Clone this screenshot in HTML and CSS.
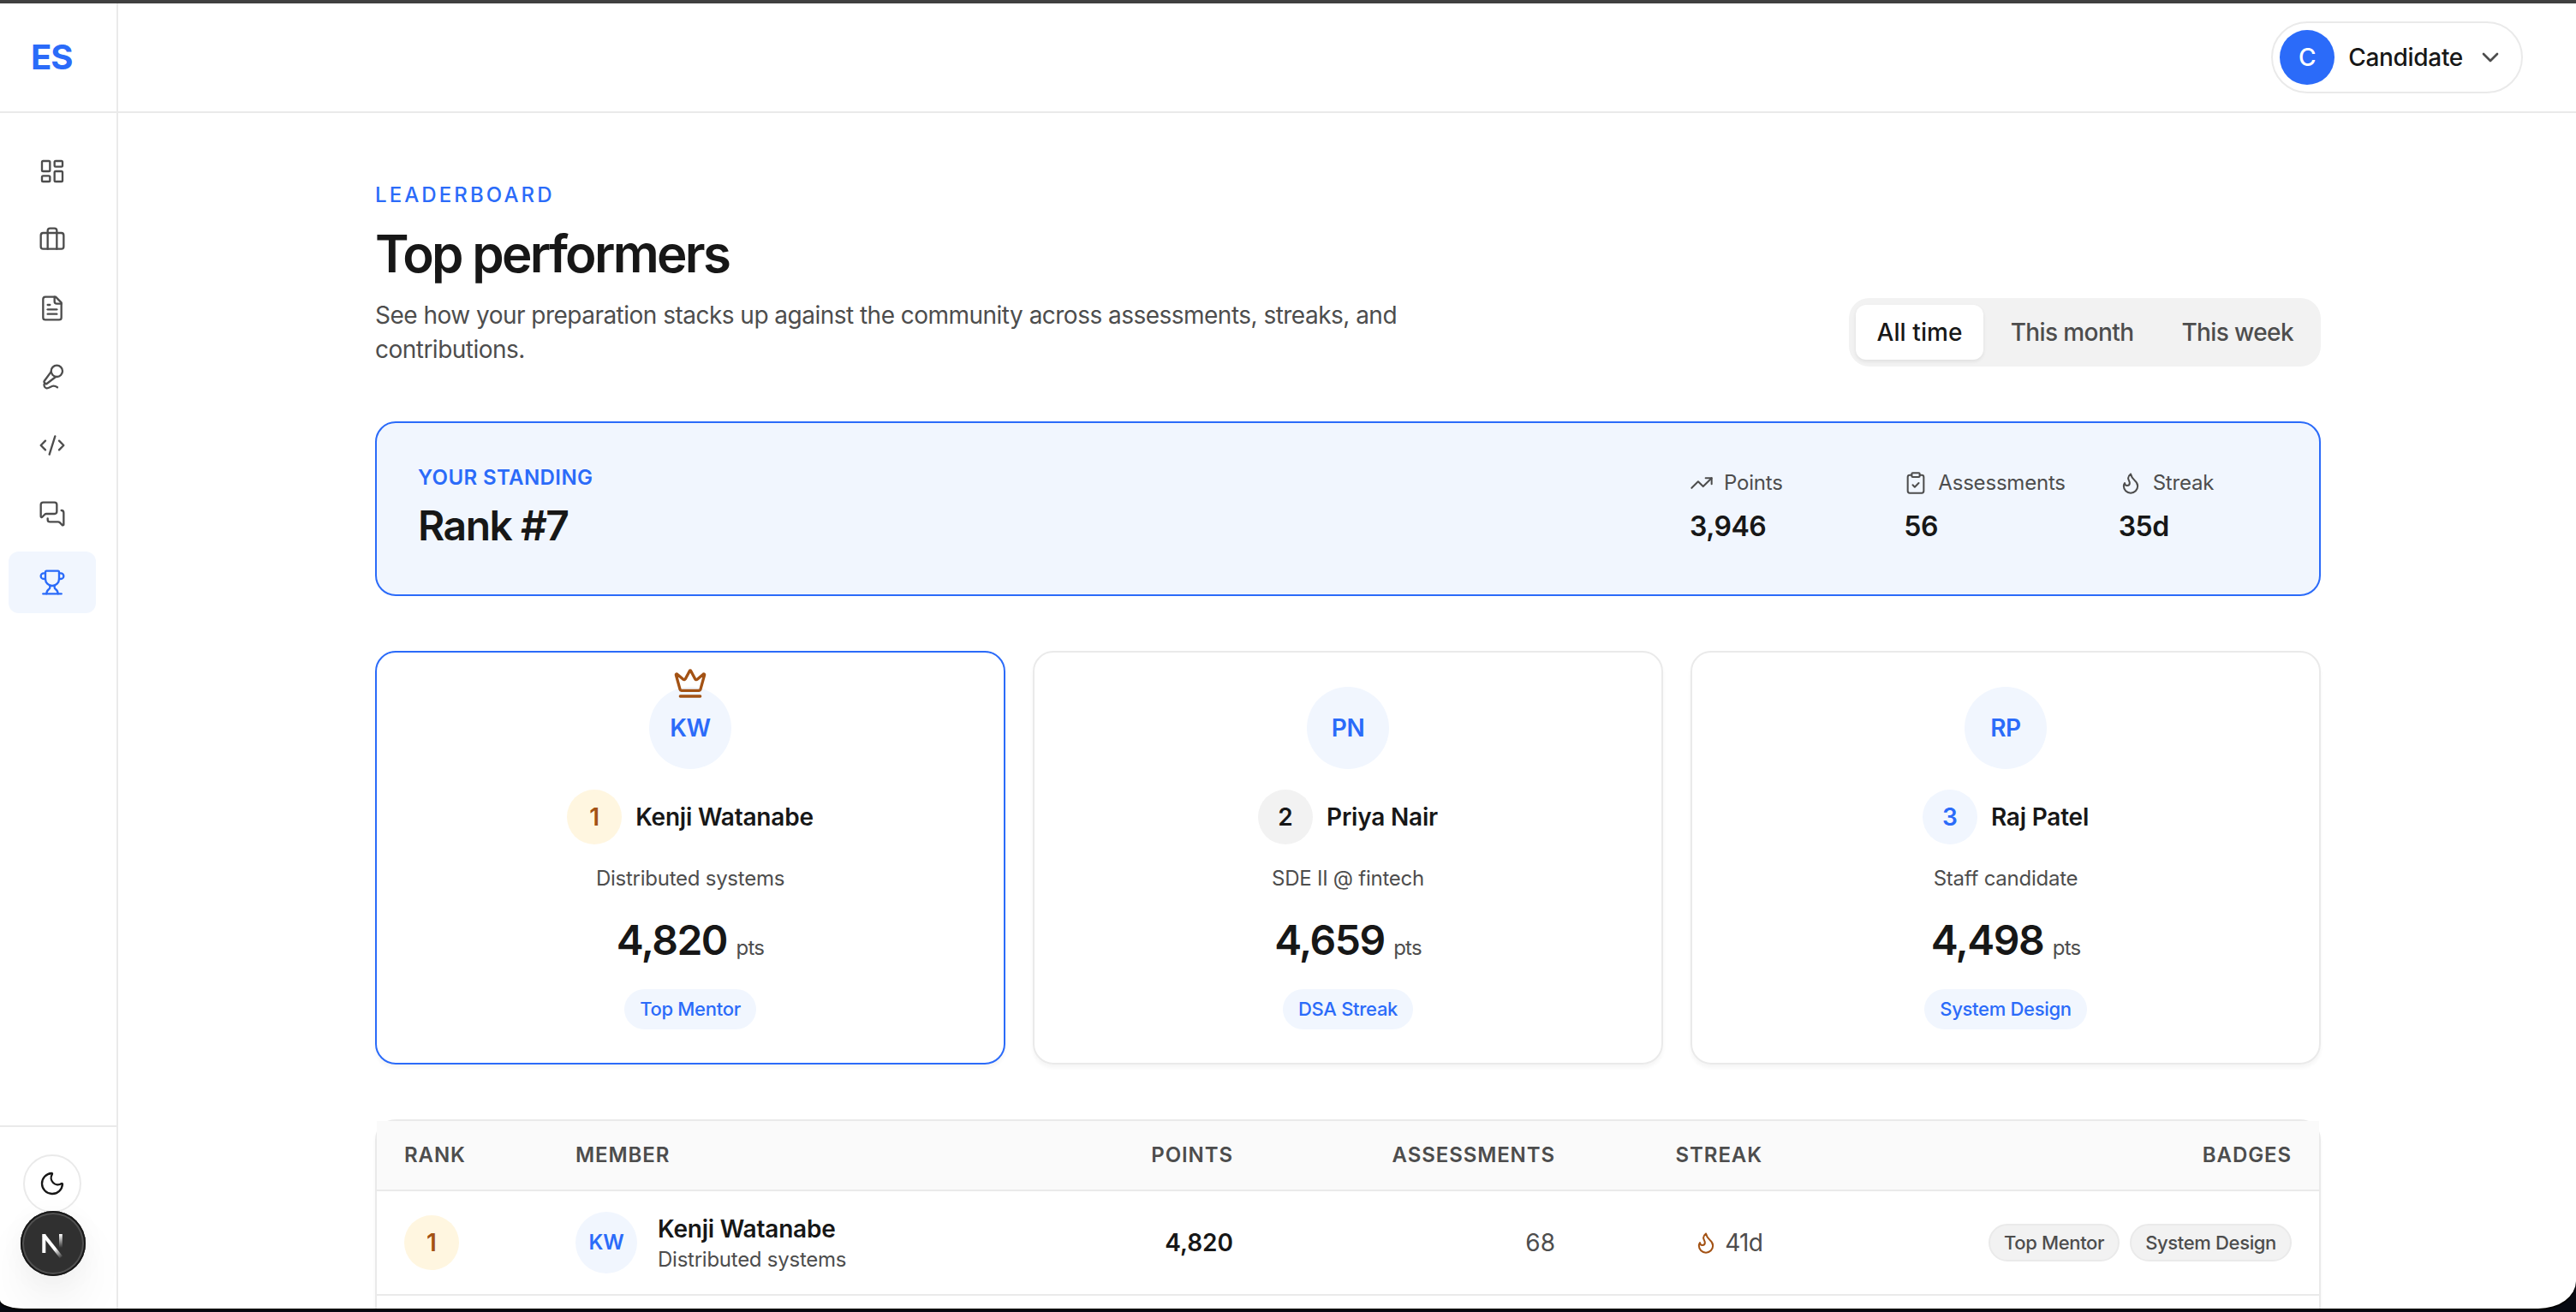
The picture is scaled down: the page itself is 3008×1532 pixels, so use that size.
FILE: index.html
```html
<!DOCTYPE html>
<html lang="en">
<head>
    <meta charset="UTF-8">
    <meta name="viewport" content="width=device-width, initial-scale=1.0">
    <title>Leaderboard</title>
    <link rel="stylesheet" href="styles.css">
</head>
<body>

    <!-- shared icons -->
    <svg class="sprite">
        <symbol id="flame" viewBox="0 0 24 24"><path d="M12 3q1 4 4 6.5t3 5.5a1 1 0 0 1-14 0 5 5 0 0 1 1-3 1 1 0 0 0 5 0c0-2-1.5-3-1.5-5q0-2 2.5-4"/></symbol>
    </svg>

    <div class="window">
        <aside class="sidebar">
            <div class="logo">ES</div>
            <nav class="nav">
                <a class="nav-item"><svg class="icon" viewBox="0 0 24 24"><rect width="7" height="9" x="3" y="3" rx="1"/><rect width="7" height="5" x="14" y="3" rx="1"/><rect width="7" height="9" x="14" y="12" rx="1"/><rect width="7" height="5" x="3" y="16" rx="1"/></svg></a>
                <a class="nav-item"><svg class="icon" viewBox="0 0 24 24"><path d="M16 20V4a2 2 0 0 0-2-2h-4a2 2 0 0 0-2 2v16"/><rect width="20" height="14" x="2" y="6" rx="2"/></svg></a>
                <a class="nav-item"><svg class="icon" viewBox="0 0 24 24"><path d="M15 2H6a2 2 0 0 0-2 2v16a2 2 0 0 0 2 2h12a2 2 0 0 0 2-2V7Z"/><path d="M14 2v4a2 2 0 0 0 2 2h4"/><path d="M10 9H8"/><path d="M16 13H8"/><path d="M16 17H8"/></svg></a>
                <a class="nav-item"><svg class="icon" viewBox="0 0 24 24"><path d="m11 7.601-5.994 8.19a1 1 0 0 0 .1 1.298l.817.818a1 1 0 0 0 1.314.087L15.09 12"/><path d="M16.5 21.174C15.5 20.5 14.372 20 13 20c-2.058 0-3.928 2.356-6 2-2.072-.356-2.775-3.369-1.5-4.5"/><circle cx="16" cy="7" r="5"/></svg></a>
                <a class="nav-item"><svg class="icon" viewBox="0 0 24 24"><path d="m18 16 4-4-4-4"/><path d="m6 8-4 4 4 4"/><path d="m14.5 4-5 16"/></svg></a>
                <a class="nav-item"><svg class="icon" viewBox="0 0 24 24"><path d="M16 10a2 2 0 0 1-2 2H6.828a2 2 0 0 0-1.414.586l-2.202 2.202A.71.71 0 0 1 2 14.286V4a2 2 0 0 1 2-2h10a2 2 0 0 1 2 2z"/><path d="M20 9a2 2 0 0 1 2 2v10.286a.71.71 0 0 1-1.212.502l-2.202-2.202A2 2 0 0 0 17.172 19H10a2 2 0 0 1-2-2v-1"/></svg></a>
                <a class="nav-item active"><svg class="icon" viewBox="0 0 24 24"><path d="M10 14.66v1.626a2 2 0 0 1-.976 1.696A5 5 0 0 0 7 21.978"/><path d="M14 14.66v1.626a2 2 0 0 0 .976 1.696A5 5 0 0 1 17 21.978"/><path d="M18 9h1.5a1 1 0 0 0 0-5H18"/><path d="M4 22h16"/><path d="M6 9a6 6 0 0 0 12 0V3a1 1 0 0 0-1-1H7a1 1 0 0 0-1 1z"/><path d="M6 9H4.5a1 1 0 0 1 0-5H6"/></svg></a>
            </nav>
            <div class="sidebar-footer">
                <button class="theme-toggle"><svg class="icon" viewBox="0 0 24 24"><path d="M20.985 12.486a9 9 0 1 1-9.473-9.472c.405-.022.617.46.402.803a6 6 0 0 0 8.268 8.268c.344-.215.825-.004.803.401"/></svg></button>
            </div>
        </aside>

        <div class="page">
            <header class="topbar">
                <button class="user-menu">
                    <span class="user-avatar">C</span>
                    <span class="user-name">Candidate</span>
                    <svg class="icon" viewBox="0 0 24 24"><path d="m6 9 6 6 6-6"/></svg>
                </button>
            </header>

            <main class="content">
                <div class="heading">
                    <div>
                        <p class="eyebrow">LEADERBOARD</p>
                        <h1>Top performers</h1>
                        <p class="lead">See how your preparation stacks up against the community across assessments, streaks, and<br>contributions.</p>
                    </div>
                    <div class="tabs">
                        <button class="tab selected">All time</button>
                        <button class="tab">This month</button>
                        <button class="tab">This week</button>
                    </div>
                </div>

                <section class="standing">
                    <div>
                        <p class="standing-label">YOUR STANDING</p>
                        <p class="standing-rank">Rank #7</p>
                    </div>
                    <div class="metrics">
                        <div>
                            <p class="metric-label"><svg class="icon icon-sm" viewBox="0 0 24 24"><path d="M16 7h6v6"/><path d="m22 7-8.5 8.5-5-5L2 17"/></svg>Points</p>
                            <p class="metric-value">3,946</p>
                        </div>
                        <div>
                            <p class="metric-label"><svg class="icon icon-sm" viewBox="0 0 24 24"><rect width="8" height="4" x="8" y="2" rx="1"/><path d="M16 4h2a2 2 0 0 1 2 2v14a2 2 0 0 1-2 2H6a2 2 0 0 1-2-2V6a2 2 0 0 1 2-2h2"/><path d="m9 14 2 2 4-4"/></svg>Assessments</p>
                            <p class="metric-value">56</p>
                        </div>
                        <div>
                            <p class="metric-label"><svg class="icon icon-sm"><use href="#flame"/></svg>Streak</p>
                            <p class="metric-value">35d</p>
                        </div>
                    </div>
                </section>

                <section class="podium">
                    <div class="card first">
                        <div class="avatar">
                            <svg class="icon crown" viewBox="0 0 24 24"><path d="M11.562 3.266a.5.5 0 0 1 .876 0L15.39 8.87a1 1 0 0 0 1.516.294L21.183 5.5a.5.5 0 0 1 .798.519l-2.834 10.246a1 1 0 0 1-.956.734H5.81a1 1 0 0 1-.957-.734L2.02 6.02a.5.5 0 0 1 .798-.519l4.276 3.664a1 1 0 0 0 1.516-.294z"/><path d="M5 21h14"/></svg>
                            KW
                        </div>
                        <div class="who"><span class="rank gold">1</span><span class="name">Kenji Watanabe</span></div>
                        <p class="role">Distributed systems</p>
                        <p class="score">4,820 <small>pts</small></p>
                        <span class="pill">Top Mentor</span>
                    </div>
                    <div class="card">
                        <div class="avatar">PN</div>
                        <div class="who"><span class="rank silver">2</span><span class="name">Priya Nair</span></div>
                        <p class="role">SDE II @ fintech</p>
                        <p class="score">4,659 <small>pts</small></p>
                        <span class="pill">DSA Streak</span>
                    </div>
                    <div class="card">
                        <div class="avatar">RP</div>
                        <div class="who"><span class="rank bronze">3</span><span class="name">Raj Patel</span></div>
                        <p class="role">Staff candidate</p>
                        <p class="score">4,498 <small>pts</small></p>
                        <span class="pill">System Design</span>
                    </div>
                </section>

                <section class="table">
                    <div class="row head">
                        <div>RANK</div>
                        <div>MEMBER</div>
                        <div class="right">POINTS</div>
                        <div class="right">ASSESSMENTS</div>
                        <div class="right">STREAK</div>
                        <div class="right">BADGES</div>
                    </div>
                    <div class="row">
                        <div><span class="rank gold">1</span></div>
                        <div class="member">
                            <div class="avatar avatar-sm">KW</div>
                            <div>
                                <p class="name">Kenji Watanabe</p>
                                <p class="role">Distributed systems</p>
                            </div>
                        </div>
                        <div class="right points">4,820</div>
                        <div class="right">68</div>
                        <div class="right streak"><svg class="icon icon-sm"><use href="#flame"/></svg>41d</div>
                        <div class="right badges"><span class="badge">Top Mentor</span><span class="badge">System Design</span></div>
                    </div>
                    <div class="row"></div>
                </section>
            </main>
        </div>
    </div>

    <div class="dev-badge">
        <svg viewBox="0 0 76 76">
            <defs>
                <linearGradient id="diagonal" gradientUnits="userSpaceOnUse" x1="41" y1="44" x2="49" y2="54"><stop stop-color="#fff"/><stop offset="1" stop-color="#fff" stop-opacity="0"/></linearGradient>
                <linearGradient id="stem" gradientUnits="userSpaceOnUse" x1="47" y1="27" x2="47" y2="43"><stop stop-color="#fff"/><stop offset="1" stop-color="#fff" stop-opacity="0"/></linearGradient>
            </defs>
            <path d="M27.300 49V27" stroke="#fff"/>
            <path d="M27 28 47.500 54" stroke="url(#diagonal)"/>
            <rect x="45" y="27" width="3.800" height="16" fill="url(#stem)"/>
        </svg>
    </div>

</body>
</html>
```
FILE: styles.css
```css
* {
    box-sizing: border-box;
    margin: 0;
    padding: 0;
}

body {
    width: 3008px;
    height: 1532px;
    overflow: hidden;
    border-top: 4px solid #404040;
    background-color: #070a12;
    color: #171717;
    font-family: Inter, "Liberation Sans", sans-serif;
    font-size: 28px;
    line-height: 40px;
}

button {
    border: none;
    background: none;
    font: inherit;
    color: inherit;
}

.sprite {
    display: none;
}

.icon {
    width: 32px;
    height: 32px;
    flex-shrink: 0;
    fill: none;
    stroke: currentColor;
    stroke-width: 1.75;
    stroke-linecap: round;
    stroke-linejoin: round;
}

.icon-sm {
    width: 28px;
    height: 28px;
}

.window {
    display: flex;
    height: 1524px;
    overflow: hidden;
    background-color: #fff;
    border-radius: 0 0 44px 28px / 0 0 32px 10px;
    box-shadow: 0 2px 0 #000;
}

/* sidebar */
.sidebar {
    display: flex;
    flex-direction: column;
    width: 138px;
    border-right: 2px solid #eaeaea;
}

.logo {
    display: flex;
    align-items: center;
    height: 128px;
    padding-left: 36px;
    border-bottom: 2px solid #eaeaea;
    color: #2b6bf9;
    font-size: 40px;
    font-weight: 700;
    letter-spacing: -1px;
}

.nav {
    display: flex;
    flex-direction: column;
    gap: 8px;
    flex: 1;
    padding: 32px 24px 0 10px;
}

.nav-item {
    display: flex;
    align-items: center;
    justify-content: center;
    height: 72px;
    border-radius: 12px;
    color: #4d4d4d;
}

.nav-item.active {
    background-color: #f1f6fe;
    color: #2b6bf9;
}

.sidebar-footer {
    height: 214px;
    padding: 32px 0 0 27px;
    border-top: 2px solid #eaeaea;
}

.theme-toggle {
    display: flex;
    align-items: center;
    justify-content: center;
    width: 68px;
    height: 68px;
    border: 2px solid #eaeaea;
    border-radius: 50%;
}

.dev-badge {
    position: absolute;
    left: 24px;
    top: 1414px;
    width: 76px;
    height: 76px;
    border-radius: 50%;
    background-color: #303030;
    box-shadow: inset 0 0 0 2px #171717, inset 0 0 0 4px #505050, 0 32px 64px -12px rgba(0, 0, 0, 0.12), 0 4px 32px rgba(0, 0, 0, 0.04);
}

.dev-badge svg {
    display: block;
    fill: none;
    stroke-width: 4;
}

/* top bar */
.page {
    flex: 1;
}

.topbar {
    display: flex;
    align-items: center;
    justify-content: flex-end;
    height: 128px;
    padding-right: 62px;
    border-bottom: 2px solid #eaeaea;
}

.user-menu {
    display: flex;
    align-items: center;
    gap: 16px;
    height: 84px;
    padding: 0 20px 0 8px;
    border: 2px solid #eaeaea;
    border-radius: 42px;
    font-weight: 500;
    letter-spacing: -0.3px;
}

.user-menu .icon {
    color: #4d4d4d;
    stroke-width: 2;
}

.user-avatar {
    width: 64px;
    height: 64px;
    border-radius: 50%;
    background-color: #2b6bf9;
    color: #fff;
    line-height: 64px;
    text-align: center;
}

/* heading */
.content {
    display: flex;
    flex-direction: column;
    gap: 64px;
    padding: 80px 298px 0 300px;
}

.heading {
    display: flex;
    align-items: flex-end;
    justify-content: space-between;
}

.eyebrow {
    color: #2b6bf9;
    font-size: 24px;
    font-weight: 500;
    line-height: 32px;
    letter-spacing: 3.1px;
}

h1 {
    margin-top: 16px;
    font-size: 60px;
    font-weight: 600;
    line-height: 72px;
    letter-spacing: -2.7px;
}

.lead {
    margin-top: 16px;
    color: #4d4d4d;
    letter-spacing: -0.52px;
}

.tabs {
    display: flex;
    gap: 8px;
    height: 80px;
    padding: 8px;
    border-radius: 24px;
    background-color: #f2f2f2;
    color: #4d4d4d;
    font-weight: 500;
    letter-spacing: -0.6px;
}

.tab {
    height: 64px;
    padding: 0 24px;
    border-radius: 12px;
    letter-spacing: inherit;
}

.tab.selected {
    background-color: #fff;
    color: #171717;
    letter-spacing: 0.1px;
    box-shadow: 0 2px 4px rgba(0, 0, 0, 0.08);
}

/* your standing */
.standing {
    display: flex;
    align-items: center;
    justify-content: space-between;
    height: 204px;
    padding: 0 48px;
    border: 2px solid #2b6bf9;
    border-radius: 24px;
    background-color: #f1f6fe;
}

.standing-label {
    color: #2b6bf9;
    font-size: 24px;
    font-weight: 600;
    line-height: 32px;
    letter-spacing: 0.4px;
}

.standing-rank {
    margin-top: 8px;
    font-size: 48px;
    font-weight: 600;
    line-height: 64px;
    letter-spacing: -1.5px;
}

.metrics {
    display: grid;
    grid-template-columns: repeat(3, minmax(0, 1fr));
    gap: 64px;
    width: 687px;
    padding-bottom: 5px;
}

.metric-label {
    display: flex;
    align-items: center;
    gap: 12px;
    color: #4d4d4d;
    font-size: 24px;
    line-height: 32px;
    letter-spacing: -0.2px;
}

.metric-value {
    margin-top: 15px;
    font-size: 32px;
    font-weight: 600;
    letter-spacing: -0.5px;
}

/* top three */
.podium {
    display: grid;
    grid-template-columns: repeat(3, 1fr);
    gap: 32px;
}

.card {
    display: flex;
    flex-direction: column;
    align-items: center;
    height: 483px;
    padding-top: 40px;
    border: 2px solid #eaeaea;
    border-radius: 24px;
    box-shadow: 0 4px 4px rgba(0, 0, 0, 0.04);
}

.card.first {
    border-color: #2b6bf9;
}

.avatar {
    position: relative;
    width: 96px;
    height: 96px;
    border-radius: 50%;
    background-color: #f1f6fe;
    color: #2b6bf9;
    font-weight: 600;
    line-height: 96px;
    letter-spacing: -0.3px;
    text-align: center;
}

.crown {
    position: absolute;
    left: 28px;
    top: -24px;
    width: 40px;
    height: 40px;
    color: #a35214;
    stroke-width: 2;
}

.who {
    display: flex;
    align-items: center;
    gap: 16px;
    margin-top: 24px;
}

.rank {
    display: block;
    width: 64px;
    height: 64px;
    border-radius: 50%;
    font-weight: 600;
    line-height: 64px;
    text-align: center;
}

.gold {
    background-color: #fff6e0;
    color: #a35214;
}

.silver {
    background-color: #f2f2f2;
}

.bronze {
    background-color: #f1f6fe;
    color: #2b6bf9;
}

.name {
    font-weight: 600;
    letter-spacing: -0.2px;
}

.role {
    color: #4d4d4d;
    font-size: 24px;
    line-height: 32px;
    letter-spacing: -0.25px;
}

.card .role {
    margin-top: 24px;
}

.score {
    margin-top: 24px;
    font-size: 48px;
    font-weight: 600;
    line-height: 64px;
    letter-spacing: -1.5px;
}

.score small {
    color: #4d4d4d;
    font-size: 24px;
    font-weight: 400;
    letter-spacing: -0.8px;
}

.pill {
    margin-top: 16px;
    padding: 0 18px;
    border-radius: 24px;
    background-color: #f1f6fe;
    color: #2b6bf9;
    font-size: 22px;
    font-weight: 500;
    line-height: 47px;
    letter-spacing: -0.3px;
}

/* table */
.table {
    height: 400px;
    border: 2px solid #eaeaea;
    border-radius: 24px;
    box-shadow: 0 4px 4px rgba(0, 0, 0, 0.04);
}

.row {
    display: grid;
    grid-template-columns: 200px 500px 332px 376px 242px 618px;
    align-items: center;
    height: 122px;
    border-bottom: 2px solid #eaeaea;
    color: #4d4d4d;
}

.row > div {
    padding: 0 32px;
}

.row .name,
.row .points {
    color: #171717;
    font-weight: 600;
}

.head {
    height: 82px;
    background-color: #fafafa;
    font-size: 24px;
    font-weight: 600;
    letter-spacing: 0.9px;
}

.right {
    text-align: right;
}

.member {
    display: flex;
    align-items: center;
    gap: 24px;
}

.avatar-sm {
    width: 72px;
    height: 72px;
    font-size: 24px;
    line-height: 72px;
}

.streak {
    display: flex;
    align-items: center;
    justify-content: flex-end;
    gap: 8px;
    letter-spacing: -0.8px;
}

.streak .icon {
    color: #a35214;
}

.badges {
    display: flex;
    justify-content: flex-end;
    gap: 12px;
}

.badge {
    padding: 0 16px;
    border: 2px solid #eaeaea;
    border-radius: 22px;
    background-color: #f2f2f2;
    font-size: 22px;
    font-weight: 500;
    line-height: 40px;
    letter-spacing: -0.35px;
}
```
